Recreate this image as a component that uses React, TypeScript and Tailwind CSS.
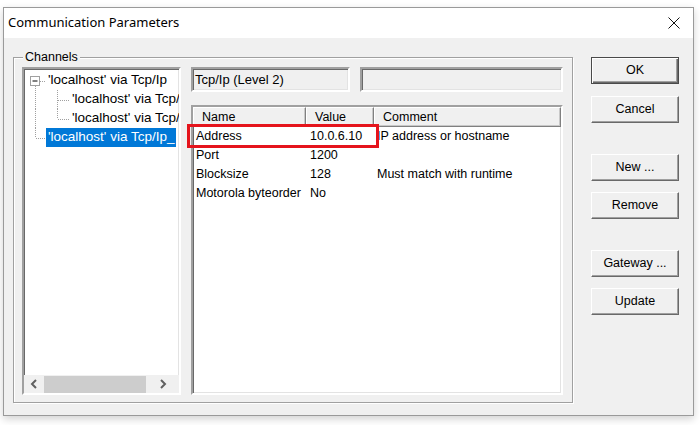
import React from "react";

// Communication Parameters dialog (Win classic look)

const FONT = { fontFamily: '"Liberation Sans", Arial, sans-serif' };

const sunken =
  "border-2 border-t-[#a0a0a0] border-l-[#a0a0a0] border-r-white border-b-white shadow-[inset_1px_1px_0_#696969,inset_-1px_-1px_0_#e3e3e3]";

function Btn({ label, def = false, className = "" }: { label: string; def?: boolean; className?: string }) {
  return (
    <button
      className={`flex h-[27px] w-[88px] items-center justify-center bg-[#f0f0f0] text-[12.5px] text-black ${
        def
          ? "border border-[#4a4a4a] shadow-[inset_1px_1px_0_#fff,inset_-1px_-1px_0_#696969,inset_-2px_-2px_0_#a0a0a0]"
          : "border border-t-white border-l-white border-r-[#696969] border-b-[#696969] shadow-[inset_-1px_-1px_0_#a0a0a0]"
      } ${className}`}
    >
      {label}
    </button>
  );
}

const DOT = { stroke: "#a0a0a0", strokeWidth: 1, strokeDasharray: "1 1" };

function TreeRow({ level, kind, text, selected = false }: { level: number; kind: "root" | "mid" | "last" | "end"; text: string; selected?: boolean }) {
  const w = level === 0 ? 22 : 46;
  return (
    <div className="flex h-[19px] items-center whitespace-nowrap">
      <svg width={w} height={19} className="shrink-0">
        {kind === "root" && (
          <>
            <rect x={6.5} y={5.5} width={9} height={9} fill="#fff" stroke="#a0a0a0" />
            <line x1={8.5} y1={10} x2={13.5} y2={10} stroke="#000" />
            <line x1={16} y1={10.5} x2={22} y2={10.5} {...DOT} />
            <line x1={11.5} y1={15} x2={11.5} y2={19} {...DOT} />
          </>
        )}
        {(kind === "mid" || kind === "last") && (
          <>
            <line x1={11.5} y1={0} x2={11.5} y2={19} {...DOT} />
            <line x1={33.5} y1={0} x2={33.5} y2={kind === "mid" ? 19 : 10} {...DOT} />
            <line x1={34} y1={10.5} x2={46} y2={10.5} {...DOT} />
          </>
        )}
        {kind === "end" && (
          <>
            <line x1={11.5} y1={0} x2={11.5} y2={10} {...DOT} />
            <line x1={12} y1={10.5} x2={22} y2={10.5} {...DOT} />
          </>
        )}
      </svg>
      <span
        className={`flex h-[19px] items-center px-[2px] text-[13.5px] ${
          selected ? "bg-[#0078d7] text-white" : "text-black"
        }`}
      >
        {text}
      </span>
    </div>
  );
}

const COLS = [113, 68, 187];

const ROWS = [
  ["Address", "10.0.6.10", "IP address or hostname"],
  ["Port", "1200", ""],
  ["Blocksize", "128", "Must match with runtime"],
  ["Motorola byteorder", "No", ""],
];

export default function App() {
  return (
    <div className="h-[425px] w-[700px] overflow-hidden bg-white pl-[3px] pt-[7px]" style={FONT}>
      <div className="flex h-[409px] w-[691px] flex-col border border-[#9a9a9a] bg-[#f0f0f0] shadow-[0_3px_8px_rgba(0,0,0,0.18)]">
        {/* title bar */}
        <div className="flex h-[30px] shrink-0 items-center justify-between bg-white pl-[4px] pr-[13px]">
          <span className="text-[13px] text-black" style={{ fontFamily: '"Noto Sans", "Open Sans", sans-serif' }}>
            Communication Parameters
          </span>
          <svg width="12" height="12" viewBox="0 0 12 12">
            <path d="M0.5 0.5 L11.5 11.5 M11.5 0.5 L0.5 11.5" stroke="#111" strokeWidth="1" />
          </svg>
        </div>

        <div className="flex flex-1">
          {/* Channels group */}
          <div className="relative ml-[9px] mt-[19px] h-[346px] w-[560px] border border-[#a0a0a0] shadow-[inset_1px_1px_0_#fff,1px_1px_0_#fff]">
            <span className="absolute left-[9px] top-[-9px] bg-[#f0f0f0] px-[2px] text-[12.5px] leading-[16px] text-black">
              Channels
            </span>
            <div className="flex gap-[10px] pl-[8px] pt-[9px]">
              {/* tree */}
              <div className={`flex h-[328px] w-[159px] flex-col bg-white ${sunken}`}>
                <div className="flex-1 overflow-hidden pt-[2px]">
                  <TreeRow level={0} kind="root" text="'localhost' via Tcp/Ip" />
                  <TreeRow level={1} kind="mid" text="'localhost' via Tcp/Ip" />
                  <TreeRow level={1} kind="last" text="'localhost' via Tcp/Ip" />
                  <TreeRow level={0} kind="end" text="'localhost' via Tcp/Ip_" selected />
                </div>
                <div className="flex h-[18px] shrink-0 items-center bg-[#f0f0f0]">
                  <div className="flex w-[20px] justify-center">
                    <svg width="8" height="10" viewBox="0 0 8 10">
                      <path d="M6 1 L2 5 L6 9" fill="none" stroke="#606060" strokeWidth="2" />
                    </svg>
                  </div>
                  <div className="h-[17px] w-[102px] bg-[#cdcdcd]" />
                  <div className="flex flex-1 justify-center">
                    <svg width="8" height="10" viewBox="0 0 8 10">
                      <path d="M2 1 L6 5 L2 9" fill="none" stroke="#606060" strokeWidth="2" />
                    </svg>
                  </div>
                </div>
              </div>

              {/* right pane */}
              <div className="flex w-[372px] flex-col">
                <div className="flex gap-[10px]">
                  <div className={`flex h-[25px] w-[159px] items-center pl-[2px] text-[13px] text-black ${sunken}`}>
                    Tcp/Ip (Level 2)
                  </div>
                  <div className={`h-[25px] w-[203px] ${sunken}`} />
                </div>
                <div className="relative mt-[13px]">
                  <div className={`h-[290px] w-[372px] bg-white ${sunken}`}>
                    <div className="flex h-[20px]">
                      {["Name", "Value", "Comment"].map((h, i) => (
                        <div
                          key={h}
                          style={{ width: COLS[i] }}
                          className="flex items-center border border-t-white border-l-white border-r-[#808080] border-b-[#808080] bg-[#f0f0f0] pl-[8px] text-[12.5px] text-black shadow-[inset_-1px_-1px_0_#c8c8c8]"
                        >
                          {h}
                        </div>
                      ))}
                    </div>
                    {ROWS.map((r) => (
                      <div key={r[0]} className="flex h-[19px] items-center text-[12.5px] text-black">
                        <span style={{ width: COLS[0] }} className="whitespace-nowrap pl-[3px]">{r[0]}</span>
                        <span style={{ width: COLS[1] }} className="whitespace-nowrap pl-[4px]">{r[1]}</span>
                        <span style={{ width: COLS[2] }} className="whitespace-nowrap pl-[3px]">{r[2]}</span>
                      </div>
                    ))}
                  </div>
                  {/* highlight annotation */}
                  <div className="absolute left-[-4px] top-[19px] h-[24px] w-[192px] border-[3px] border-[#e5141c]" />
                </div>
              </div>
            </div>
          </div>

          {/* buttons */}
          <div className="ml-[18px] flex flex-col pt-[19px]">
            <Btn label="OK" def />
            <Btn label="Cancel" className="mt-[12px]" />
            <Btn label="New ..." className="mt-[31px]" />
            <Btn label="Remove" className="mt-[11px]" />
            <Btn label="Gateway ..." className="mt-[31px]" />
            <Btn label="Update" className="mt-[11px]" />
          </div>
        </div>
      </div>
    </div>
  );
}
